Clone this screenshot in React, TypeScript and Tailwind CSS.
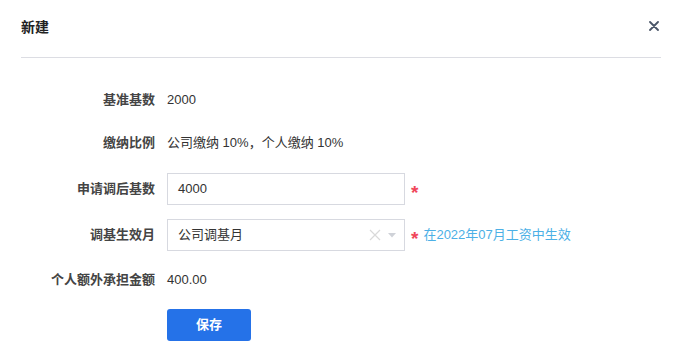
import React from "react";

const Row = ({ label, children, className = "" }: { label: string; children?: React.ReactNode; className?: string }) => (
  <div className={`flex items-center h-[32px] ${className}`}>
    <div className="w-[156px] pr-[1px] text-right text-[13px] font-bold text-[#444] shrink-0">{label}</div>
    <div className="ml-[11px] flex items-center text-[13px] text-[#333]">{children}</div>
  </div>
);

export default function App() {
  return (
    <div
      className="w-[684px] h-[364px] bg-white relative"
      style={{ fontFamily: '"Liberation Sans", Arial, "Noto Sans CJK SC", sans-serif' }}
    >
      <div className="ml-[21px] mr-[23px] h-[58px] border-b border-[#dcdde3] flex items-start justify-between">
        <div className="mt-[18px] text-[14px] font-bold text-[#222] leading-[18px]">新建</div>
        <svg className="mt-[21px] mr-[2px]" width="10" height="10" viewBox="0 0 10 10">
          <path d="M1 1 L9 9 M9 1 L1 9" stroke="#4a5568" strokeWidth="1.8" strokeLinecap="round" />
        </svg>
      </div>
      <div className="flex flex-col">
        <Row label="基准基数" className="mt-[26px]">2000</Row>
        <Row label="缴纳比例" className="mt-[11px]">公司缴纳 10%，个人缴纳 10%</Row>
        <Row label="申请调后基数" className="mt-[14px]">
          <div className="w-[238px] h-[32px] border border-[#d7d9e0] flex items-center px-[10px] text-[13px] text-[#333]">
            4000
          </div>
          <span className="ml-[6px] text-[#f0465a] text-[19px] font-bold leading-none mt-[6px]">*</span>
        </Row>
        <Row label="调基生效月" className="mt-[14px]">
          <div className="w-[238px] h-[32px] border border-[#d7d9e0] flex items-center pl-[10px] pr-[8px] text-[13px] text-[#333]">
            <span className="flex-1">公司调基月</span>
            <svg width="12" height="12" viewBox="0 0 12 12">
              <path d="M1 1 L11 11 M11 1 L1 11" stroke="#d9d9d9" strokeWidth="1.2" />
            </svg>
            <svg className="ml-[7px]" width="8" height="5" viewBox="0 0 8 5">
              <path d="M0 0 L8 0 L4 4.5 Z" fill="#cfd2d8" />
            </svg>
          </div>
          <span className="ml-[6px] text-[#f0465a] text-[19px] font-bold leading-none mt-[6px]">*</span>
          <span className="ml-[5px] text-[13px] text-[#4cb0e6]">在2022年07月工资中生效</span>
        </Row>
        <Row label="个人额外承担金额" className="mt-[13px]">400.00</Row>
        <div className="flex mt-[13px]">
          <button className="ml-[167px] w-[84px] h-[32px] rounded-[3px] bg-[#2572e8] text-white text-[13px] font-bold">
            保存
          </button>
        </div>
      </div>
    </div>
  );
}
